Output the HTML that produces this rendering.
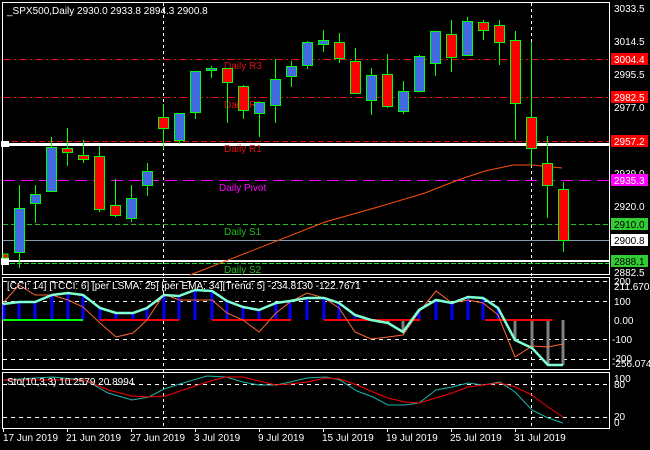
<!DOCTYPE html>
<html><head><meta charset="utf-8"><style>
html,body{margin:0;padding:0;background:#000;}
svg{display:block;}
text{font-family:"Liberation Sans",sans-serif;font-size:10px;fill:#fff;}
</style></head><body>
<svg width="650" height="450" viewBox="0 0 650 450" xmlns="http://www.w3.org/2000/svg">
<rect width="650" height="450" fill="#000"/>
<!-- frames -->
<g fill="none" stroke="#fff" stroke-width="1">
<rect x="2.5" y="2.5" width="607" height="272"/>
<rect x="2.5" y="277.5" width="607" height="92"/>
<rect x="2.5" y="372.5" width="607" height="56"/>
</g>
<!-- vertical dashed separators -->
<g stroke="#fff" stroke-dasharray="3,3" stroke-width="1">
<line x1="163.5" y1="3" x2="163.5" y2="429"/>
<line x1="531.5" y1="3" x2="531.5" y2="429"/>
</g>
<!-- pivot lines -->
<line x1="3" y1="59.5" x2="609" y2="59.5" stroke="#e01010" stroke-dasharray="8,3,2,3"/>
<line x1="3" y1="97.5" x2="609" y2="97.5" stroke="#e01010" stroke-dasharray="8,3,2,3"/>
<line x1="3" y1="141.5" x2="609" y2="141.5" stroke="#e01010" stroke-dasharray="6,3"/>
<rect x="3" y="143" width="606" height="3" fill="#fff"/>
<line x1="3" y1="180.5" x2="609" y2="180.5" stroke="#ff00ff" stroke-dasharray="12,6"/>
<line x1="3" y1="224.5" x2="609" y2="224.5" stroke="#22bb22" stroke-dasharray="5,3"/>
<line x1="3" y1="240.5" x2="609" y2="240.5" stroke="#8899aa"/>
<rect x="3" y="260" width="606" height="2" fill="#fff"/>
<line x1="3" y1="263.5" x2="609" y2="263.5" stroke="#22dd22" stroke-dasharray="5,2"/>
<rect x="1" y="141" width="8" height="6" fill="#fff"/>
<rect x="1" y="258" width="8" height="7" fill="#fff"/>
<rect x="3" y="254" width="5" height="4" fill="#f00" stroke="#0f0"/>
<!-- labels -->
<text x="224" y="69" fill="#e01010" style="fill:#e01010">Daily R3</text>
<text x="224" y="108" style="fill:#e01010">Daily R2</text>
<text x="224" y="152" style="fill:#e01010">Daily R1</text>
<text x="219" y="191" style="fill:#ff00ff">Daily Pivot</text>
<text x="224" y="235" style="fill:#22bb22">Daily S1</text>
<text x="224" y="273" style="fill:#22bb22">Daily S2</text>
<!-- MA -->
<polyline fill="none" stroke="#ff5010" stroke-width="1" points="190,275 325,222 378,207 425,193 458,180 485,171 513,165 532,165 562,168"/>
<!-- candles -->
<g stroke="#00ff00" stroke-width="1">
<line x1="19.5" y1="185" x2="19.5" y2="268"/><rect x="14.5" y="208.5" width="10" height="44" fill="#4169e1"/>
<line x1="35.5" y1="185" x2="35.5" y2="223"/><rect x="30.5" y="194.5" width="10" height="9" fill="#4169e1"/>
<line x1="51.5" y1="137" x2="51.5" y2="192"/><rect x="46.5" y="147.5" width="10" height="44" fill="#4169e1"/>
<line x1="67.5" y1="128" x2="67.5" y2="166"/><rect x="62.5" y="148.5" width="10" height="4" fill="#f00"/>
<line x1="83.5" y1="140" x2="83.5" y2="163"/><rect x="78.5" y="155.5" width="10" height="4" fill="#f00"/>
<line x1="99.5" y1="146" x2="99.5" y2="212"/><rect x="94.5" y="156.5" width="10" height="53" fill="#f00"/>
<line x1="115.5" y1="179" x2="115.5" y2="217"/><rect x="110.5" y="205.5" width="10" height="10" fill="#f00"/>
<line x1="131.5" y1="185" x2="131.5" y2="222"/><rect x="126.5" y="198.5" width="10" height="20" fill="#4169e1"/>
<line x1="147.5" y1="163" x2="147.5" y2="196"/><rect x="142.5" y="171.5" width="10" height="14" fill="#4169e1"/>
<line x1="163.5" y1="104" x2="163.5" y2="149"/><rect x="158.5" y="117.5" width="10" height="11" fill="#f00"/>
<line x1="179.5" y1="113" x2="179.5" y2="144"/><rect x="174.5" y="113.5" width="10" height="27" fill="#4169e1"/>
<line x1="195.5" y1="71" x2="195.5" y2="119"/><rect x="190.5" y="71.5" width="10" height="41" fill="#4169e1"/>
<line x1="211.5" y1="66" x2="211.5" y2="78"/><rect x="206.5" y="68.5" width="10" height="2" fill="#4169e1"/>
<line x1="227.5" y1="68" x2="227.5" y2="123"/><rect x="222.5" y="68.5" width="10" height="14" fill="#f00"/>
<line x1="243.5" y1="85" x2="243.5" y2="119"/><rect x="238.5" y="86.5" width="10" height="24" fill="#f00"/>
<line x1="259.5" y1="102" x2="259.5" y2="137"/><rect x="254.5" y="102.5" width="10" height="11" fill="#4169e1"/>
<line x1="275.5" y1="59" x2="275.5" y2="123"/><rect x="270.5" y="79.5" width="10" height="26" fill="#4169e1"/>
<line x1="291.5" y1="61" x2="291.5" y2="87"/><rect x="286.5" y="66.5" width="10" height="10" fill="#4169e1"/>
<line x1="307.5" y1="41" x2="307.5" y2="69"/><rect x="302.5" y="42.5" width="10" height="23" fill="#4169e1"/>
<line x1="323.5" y1="30" x2="323.5" y2="52"/><rect x="318.5" y="40.5" width="10" height="4" fill="#4169e1"/>
<line x1="339.5" y1="33" x2="339.5" y2="63"/><rect x="334.5" y="42.5" width="10" height="16" fill="#f00"/>
<line x1="355.5" y1="48" x2="355.5" y2="93"/><rect x="350.5" y="61.5" width="10" height="32" fill="#f00"/>
<line x1="371.5" y1="68" x2="371.5" y2="115"/><rect x="366.5" y="75.5" width="10" height="25" fill="#4169e1"/>
<line x1="387.5" y1="54" x2="387.5" y2="108"/><rect x="382.5" y="74.5" width="10" height="32" fill="#f00"/>
<line x1="403.5" y1="81" x2="403.5" y2="114"/><rect x="398.5" y="91.5" width="10" height="20" fill="#4169e1"/>
<line x1="419.5" y1="55" x2="419.5" y2="92"/><rect x="414.5" y="56.5" width="10" height="35" fill="#4169e1"/>
<line x1="435.5" y1="31" x2="435.5" y2="76"/><rect x="430.5" y="31.5" width="10" height="32" fill="#4169e1"/>
<line x1="451.5" y1="20" x2="451.5" y2="72"/><rect x="446.5" y="34.5" width="10" height="23" fill="#f00"/>
<line x1="467.5" y1="17" x2="467.5" y2="56"/><rect x="462.5" y="21.5" width="10" height="34" fill="#4169e1"/>
<line x1="483.5" y1="20" x2="483.5" y2="40"/><rect x="478.5" y="22.5" width="10" height="8" fill="#f00"/>
<line x1="499.5" y1="20" x2="499.5" y2="65"/><rect x="494.5" y="25.5" width="10" height="17" fill="#f00"/>
<line x1="515.5" y1="31" x2="515.5" y2="140"/><rect x="510.5" y="40.5" width="10" height="63" fill="#f00"/>
<line x1="531.5" y1="42" x2="531.5" y2="166"/><rect x="526.5" y="117.5" width="10" height="31" fill="#f00"/>
<line x1="547.5" y1="136" x2="547.5" y2="218"/><rect x="542.5" y="163.5" width="10" height="22" fill="#f00"/>
<line x1="563.5" y1="182" x2="563.5" y2="252"/><rect x="558.5" y="189.5" width="10" height="51" fill="#f00"/>
</g>
<text x="7" y="14">_SPX500,Daily  2930.0 2933.8 2894.3 2900.8</text>
<!-- right axis main -->
<g>
<text x="614" y="12">3033.5</text>
<text x="614" y="45">3014.5</text>
<text x="614" y="78">2995.5</text>
<text x="614" y="111">2977.0</text>
<text x="614" y="177">2939.0</text>
<text x="614" y="210">2920.0</text>
<text x="614" y="276">2882.5</text>
<rect x="611" y="53" width="37" height="12" fill="#f00"/><text x="614" y="63">3004.4</text>
<rect x="611" y="91" width="37" height="12" fill="#f00"/><text x="614" y="101">2982.5</text>
<rect x="611" y="135" width="37" height="12" fill="#f00"/><text x="614" y="145">2957.2</text>
<rect x="611" y="174" width="37" height="12" fill="#ff00ff"/><text x="614" y="184">2935.3</text>
<rect x="611" y="218" width="37" height="12" fill="#32cd32"/><text x="614" y="228" style="fill:#000">2910.0</text>
<rect x="611" y="234" width="37" height="12" fill="#fff"/><text x="614" y="244" style="fill:#000">2900.8</text>
<rect x="611" y="255" width="37" height="12" fill="#32cd32"/><text x="614" y="265" style="fill:#000">2888.1</text>
</g>
<!-- CCI panel -->
<g stroke="#fff" stroke-dasharray="4,4" stroke-width="1">
<line x1="3" y1="281.5" x2="609" y2="281.5"/>
<line x1="3" y1="301.5" x2="609" y2="301.5"/>
<line x1="3" y1="339.5" x2="609" y2="339.5"/>
<line x1="3" y1="359.5" x2="609" y2="359.5"/>
</g>
<g stroke="#0000ff" stroke-width="3">
<line x1="4" y1="320" x2="4" y2="304"/><line x1="19" y1="320" x2="19" y2="302"/><line x1="35" y1="320" x2="35" y2="302"/><line x1="52" y1="320" x2="52" y2="295"/><line x1="68" y1="320" x2="68" y2="293"/><line x1="83" y1="320" x2="83" y2="295"/><line x1="100" y1="320" x2="100" y2="308"/><line x1="116" y1="320" x2="116" y2="313"/><line x1="133" y1="320" x2="133" y2="313"/><line x1="147" y1="320" x2="147" y2="308"/><line x1="164" y1="320" x2="164" y2="295"/><line x1="179" y1="320" x2="179" y2="296"/><line x1="195" y1="320" x2="195" y2="290"/><line x1="212" y1="320" x2="212" y2="291"/><line x1="227" y1="320" x2="227" y2="301"/><line x1="243" y1="320" x2="243" y2="307"/><line x1="259" y1="320" x2="259" y2="310"/><line x1="276" y1="320" x2="276" y2="303"/><line x1="290" y1="320" x2="290" y2="301"/><line x1="307" y1="320" x2="307" y2="298"/><line x1="324" y1="320" x2="324" y2="298"/><line x1="339" y1="320" x2="339" y2="303"/><line x1="355" y1="320" x2="355" y2="315"/><line x1="419" y1="320" x2="419" y2="310"/><line x1="436" y1="320" x2="436" y2="300"/><line x1="452" y1="320" x2="452" y2="303"/><line x1="468" y1="320" x2="468" y2="297"/><line x1="483" y1="320" x2="483" y2="298"/><line x1="498" y1="320" x2="498" y2="308"/>
</g>
<g stroke="#808080" stroke-width="3">
<line x1="388" y1="320" x2="388" y2="323"/><line x1="403" y1="320" x2="403" y2="332"/><line x1="515" y1="320" x2="515" y2="340"/><line x1="532" y1="320" x2="532" y2="348"/><line x1="548" y1="320" x2="548" y2="365"/><line x1="563" y1="320" x2="563" y2="365"/>
</g>
<g stroke-width="2">
<line x1="3" y1="320" x2="83" y2="320" stroke="#00ff00"/>
<line x1="100" y1="320" x2="179" y2="320" stroke="#f00"/>
<line x1="212" y1="320" x2="291" y2="320" stroke="#f00"/>
<line x1="324" y1="320" x2="420" y2="320" stroke="#f00"/>
<line x1="485" y1="320" x2="552" y2="320" stroke="#f00"/>
</g>
<polyline fill="none" stroke="#ff6633" stroke-width="1" points="3,303 19,285 35,295 52,295 68,300 83,307 100,323 116,337 133,333 147,320 164,294 179,300 195,300 212,300 227,313 243,320 259,332 276,313 290,302 307,293 324,298 339,308 355,332 371,339 388,337 403,335 419,312 436,291 452,303 468,300 483,303 498,315 515,357 532,346 548,347 563,344"/>
<polyline fill="none" stroke="#7fffd4" stroke-width="2.5" points="3,304 19,302 35,302 52,295 68,293 83,295 100,308 116,313 133,313 147,308 164,295 179,296 195,290 212,291 227,301 243,307 259,310 276,303 290,301 307,298 324,298 339,303 355,315 371,320 388,323 403,332 419,310 436,300 452,303 468,297 483,298 498,308 515,340 532,348 548,365 563,365"/>
<text x="7" y="289">[CCI: 14] [TCCI: 6] [per LSMA: 25] [per EMA: 34][Trend: 5]  -234.8130 -122.7671</text>
<text x="614" y="285">200</text><text x="614" y="290">211.6703</text>
<text x="614" y="305">100</text><text x="614" y="324">0.00</text>
<text x="612" y="343">-100</text><text x="612" y="362">-200</text><text x="612" y="367">-256.074</text>
<!-- Stoch -->
<g stroke="#fff" stroke-dasharray="4,4" stroke-width="1">
<line x1="3" y1="384.5" x2="609" y2="384.5"/>
<line x1="3" y1="417.5" x2="609" y2="417.5"/>
</g>
<polyline fill="none" stroke="#20b2aa" stroke-width="1" points="3,380 52,377 85,380 108,393 132,400 149,397 164,389 183,383 207,376 226,377 243,382 259,385 276,385 290,382 307,378 326,377 340,380 357,391 373,397 388,405 405,405 419,403 436,390 452,387 468,383 483,385 500,382 515,392 532,410 548,418 563,423"/>
<polyline fill="none" stroke="#f00" stroke-width="1" points="3,380 85,380 108,390 132,396 149,397 166,396 183,390 207,382 226,377 243,377 259,381 276,385 290,384 307,382 326,378 340,379 357,385 373,392 388,398 405,402 419,403 436,398 452,393 468,387 483,385 500,383 515,387 532,395 548,407 563,417"/>
<text x="7" y="385">Sto(10,3,3) 10.2579 20.8994</text>
<text x="614" y="382">100</text><text x="614" y="388">80</text>
<text x="614" y="420">20</text><text x="614" y="426">0</text>
<!-- dates -->
<g stroke="#fff"><line x1="3.5" y1="429" x2="3.5" y2="432"/><line x1="67.5" y1="429" x2="67.5" y2="432"/><line x1="131.5" y1="429" x2="131.5" y2="432"/><line x1="195.5" y1="429" x2="195.5" y2="432"/><line x1="259.5" y1="429" x2="259.5" y2="432"/><line x1="323.5" y1="429" x2="323.5" y2="432"/><line x1="387.5" y1="429" x2="387.5" y2="432"/><line x1="451.5" y1="429" x2="451.5" y2="432"/><line x1="515.5" y1="429" x2="515.5" y2="432"/></g>
<text x="3" y="441">17 Jun 2019</text>
<text x="66" y="441">21 Jun 2019</text>
<text x="130" y="441">27 Jun 2019</text>
<text x="194" y="441">3 Jul 2019</text>
<text x="258" y="441">9 Jul 2019</text>
<text x="322" y="441">15 Jul 2019</text>
<text x="386" y="441">19 Jul 2019</text>
<text x="450" y="441">25 Jul 2019</text>
<text x="514" y="441">31 Jul 2019</text>
</svg>
</body></html>
